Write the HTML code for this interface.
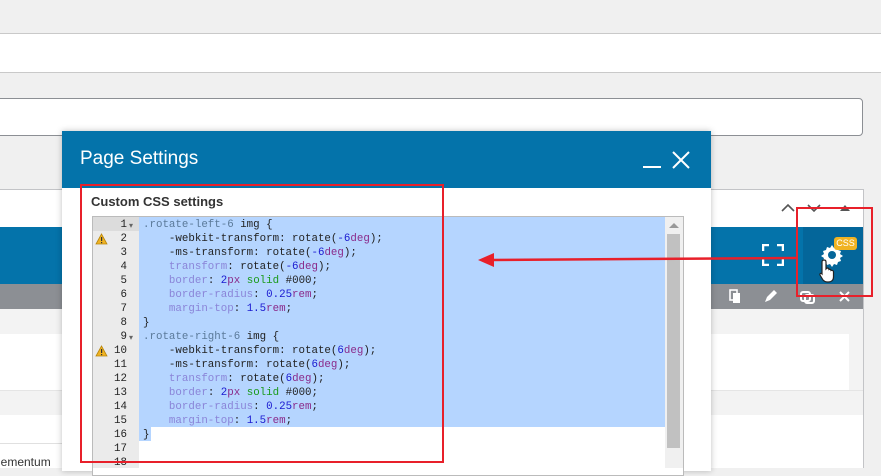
<!DOCTYPE html>
<html><head><meta charset="utf-8"><style>
*{margin:0;padding:0;box-sizing:border-box}
body{width:881px;height:468px;overflow:hidden;background:#f0f0f0;position:relative;font-family:"Liberation Sans",sans-serif}
.a{position:absolute}
.code{font-family:"Liberation Mono",monospace;font-size:10.8px;line-height:14px;white-space:pre}
.k{color:#0a3ea8}.p{color:#8a84d8}.n{color:#1a1ad0}.u{color:#8a2a8a}.g{color:#1a9a1a}.s{color:#5b7a9a}.b{color:#222}
</style></head><body>
<div class="a" style="left:0;top:33px;width:881px;height:40px;background:#fff;border-top:1px solid #c9c9c9;border-bottom:1px solid #c9c9c9"></div>
<div class="a" style="left:-5px;top:98px;width:868px;height:38px;background:#fff;border:1px solid #8c8f94;border-radius:4px"></div>
<div class="a" style="left:0;top:189px;width:864px;height:279px;background:#fff;border-right:1px solid #c3c4c7;border-top:1px solid #c3c4c7"></div>
<div class="a" style="left:0;top:227px;width:863px;height:57px;background:#0473aa"></div>
<div class="a" style="left:803px;top:227px;width:60px;height:57px;background:#04669a"></div>
<div class="a" style="left:0;top:284px;width:863px;height:25px;background:#8c8f94"></div>
<div class="a" style="left:0;top:309px;width:863px;height:25px;background:#f3f3f3"></div>
<div class="a" style="left:0;top:390px;width:863px;height:25px;background:#f3f3f3;border-top:1px solid #e5e5e5"></div>
<div class="a" style="left:849px;top:334px;width:14px;height:56px;background:#f3f3f3"></div>
<div class="a" style="left:0;top:443px;width:62px;height:1px;background:#e0e0e0"></div>
<div class="a" style="left:-2px;top:455px;font-size:12px;color:#333">lementum</div>
<svg class="a" style="left:780px;top:200px" width="80" height="16"><path d="M2 11 L8 5 L14 11" stroke="#555" stroke-width="1.6" fill="none"/><path d="M28 5 L34 11 L40 5" stroke="#555" stroke-width="1.6" fill="none"/><path d="M60 11 L65 5 L70 11Z" fill="#555"/></svg>
<svg class="a" style="left:762px;top:244px" width="22" height="22"><path d="M1 7V1H7M15 1H21V7M21 15V21H15M7 21H1V15" stroke="#fff" stroke-width="2.5" fill="none"/></svg>
<svg class="a" style="left:820px;top:243px" width="24" height="24" viewBox="0 0 24 24"><path d="M12 2l2 3 3-1 1 3 3 1-1 3 3 2-3 2 1 3-3 1-1 3-3-1-2 3-2-3-3 1-1-3-3-1 1-3-3-2 3-2-1-3 3-1 1-3 3 1z" fill="#fff"/><circle cx="12" cy="12" r="4" fill="#04669a"/></svg>
<div class="a" style="left:834px;top:237px;width:23px;height:13px;background:#f0b323;border-radius:3px;color:#fff;font-size:9px;text-align:center;line-height:13px">CSS</div>
<svg class="a" style="left:818px;top:258px" width="20" height="26"><path d="M6 2c1.5 0 2 1 2 2v7l1-1c1 0 2 .5 2 1.5 1-.5 2 0 2 1 1-.5 2.5 0 2.5 1.5V19c0 3-2 5-5 5H9c-2 0-3-1-4-2l-3-5c-.5-1 .5-2 1.5-1.5L4 16V4c0-1 .5-2 2-2z" fill="#fff" stroke="#222" stroke-width="1.2"/></svg>
<svg class="a" style="left:727px;top:288px" width="130" height="18"><rect x="3" y="2" width="7" height="10" fill="none" stroke="#fff" stroke-width="1.6"/><rect x="6" y="5" width="7" height="10" fill="#fff"/><path d="M38 14l2-5 7-7 3 3-7 7z" fill="#fff"/><rect x="74" y="4" width="9" height="9" rx="2" fill="none" stroke="#fff" stroke-width="2"/><rect x="78" y="7" width="9" height="8" rx="2" fill="none" stroke="#fff" stroke-width="2"/><path d="M113 4l9 9M122 4l-9 9" stroke="#fff" stroke-width="2"/></svg>
<div class="a" style="left:62px;top:131px;width:649px;height:340px;background:#fff;box-shadow:0 0 6px rgba(0,0,0,.25)"></div>
<div class="a" style="left:62px;top:131px;width:649px;height:57px;background:#0473aa"></div>
<div class="a" style="left:80px;top:148px;color:#fff;font-size:19px">Page Settings</div>
<div class="a" style="left:643px;top:166px;width:18px;height:2px;background:#fff"></div>
<svg class="a" style="left:672px;top:151px" width="18" height="18"><path d="M1 1L17 17M17 1L1 17" stroke="#fff" stroke-width="2"/></svg>
<div class="a" style="left:91px;top:194px;font-size:13px;font-weight:bold;color:#333">Custom CSS settings</div>
<div class="a" style="left:92px;top:216px;width:592px;height:260px;border:1px solid #bbb;background:#fff"></div>
<div class="a" style="left:93px;top:217px;width:46px;height:251px;background:#ebebeb"></div>
<div class="a" style="left:93px;top:217px;width:46px;height:14px;background:#dcdcdc"></div>
<div class="a" style="left:139px;top:217px;width:526px;height:210px;background:#b5d5ff"></div>
<div class="a" style="left:139px;top:427px;width:12px;height:14px;background:#b5d5ff"></div>
<div class="a" style="left:665px;top:217px;width:18px;height:251px;background:#f0f0f0"></div>
<div class="a" style="left:667px;top:234px;width:13px;height:214px;background:#c1c1c1"></div>
<svg class="a" style="left:669px;top:222px" width="10" height="6"><path d="M0 6L5 1 10 6Z" fill="#999"/></svg>
<div class="a code b" style="left:93px;top:218px;width:34px;text-align:right">1
2
3
4
5
6
7
8
9
10
11
12
13
14
15
16
17
18</div>
<div class="a" style="left:129px;top:219px;color:#666;font-size:8px;line-height:14px">▾</div>
<div class="a" style="left:129px;top:331px;color:#666;font-size:8px;line-height:14px">▾</div>
<svg class="a" style="left:95px;top:233px" width="13" height="12"><path d="M6.5 1L12 11H1Z" fill="#f0b323" stroke="#b8860b" stroke-width=".8"/><rect x="6" y="4" width="1.2" height="4" fill="#333"/><rect x="6" y="9" width="1.2" height="1.2" fill="#333"/></svg>
<svg class="a" style="left:95px;top:345px" width="13" height="12"><path d="M6.5 1L12 11H1Z" fill="#f0b323" stroke="#b8860b" stroke-width=".8"/><rect x="6" y="4" width="1.2" height="4" fill="#333"/><rect x="6" y="9" width="1.2" height="1.2" fill="#333"/></svg>
<div class="a code b" style="left:143px;top:218px"><span class="s">.rotate-left-6</span> img {
    -webkit-transform: rotate(<span class="n">-6</span><span class="u">deg</span>);
    -ms-transform: rotate(<span class="n">-6</span><span class="u">deg</span>);
    <span class="p">transform</span>: rotate(<span class="n">-6</span><span class="u">deg</span>);
    <span class="p">border</span>: <span class="n">2</span><span class="u">px</span> <span class="g">solid</span> #000;
    <span class="p">border-radius</span>: <span class="n">0.25</span><span class="u">rem</span>;
    <span class="p">margin-top</span>: <span class="n">1.5</span><span class="u">rem</span>;
}
<span class="s">.rotate-right-6</span> img {
    -webkit-transform: rotate(<span class="n">6</span><span class="u">deg</span>);
    -ms-transform: rotate(<span class="n">6</span><span class="u">deg</span>);
    <span class="p">transform</span>: rotate(<span class="n">6</span><span class="u">deg</span>);
    <span class="p">border</span>: <span class="n">2</span><span class="u">px</span> <span class="g">solid</span> #000;
    <span class="p">border-radius</span>: <span class="n">0.25</span><span class="u">rem</span>;
    <span class="p">margin-top</span>: <span class="n">1.5</span><span class="u">rem</span>;
}</div>
<div class="a" style="left:80px;top:184px;width:364px;height:279px;border:2px solid #e8202a"></div>
<div class="a" style="left:796px;top:207px;width:77px;height:90px;border:2px solid #e8202a"></div>
<svg class="a" style="left:476px;top:250px" width="330" height="20"><path d="M14 10L320 8" stroke="#e8202a" stroke-width="2.5"/><path d="M2 10L18 3V17Z" fill="#e8202a"/></svg>
</body></html>
